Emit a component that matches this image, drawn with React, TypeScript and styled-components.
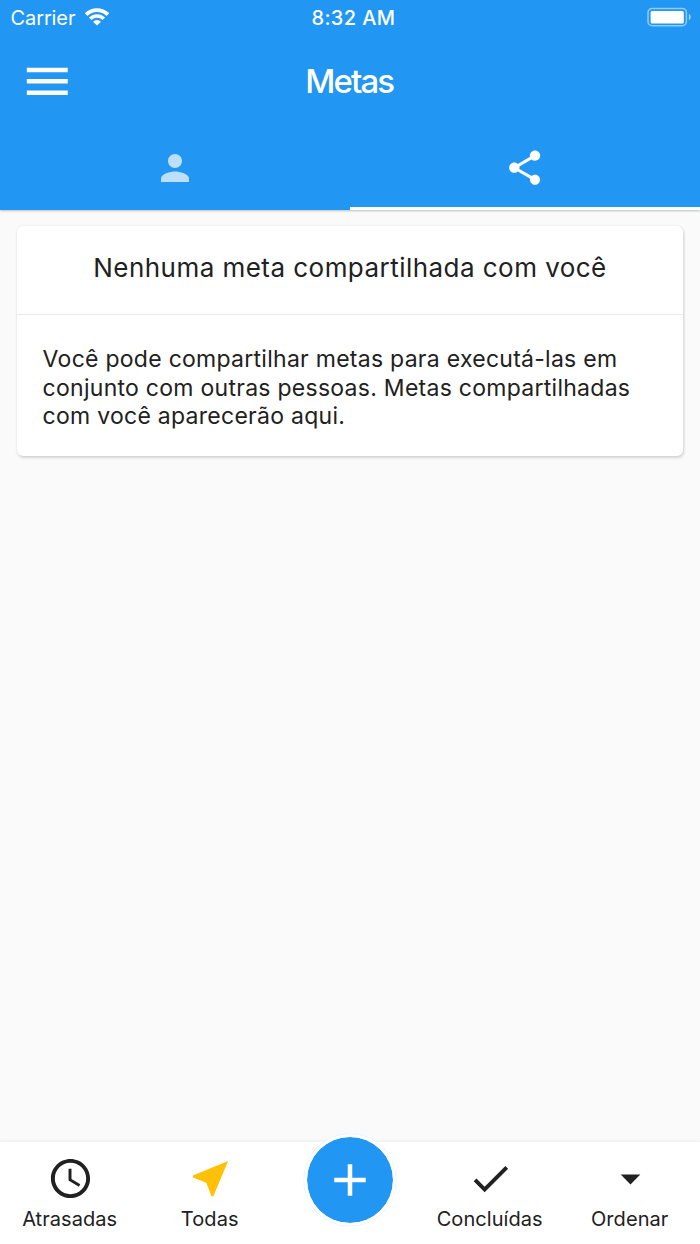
import React from 'react';
import styled, { createGlobalStyle } from 'styled-components';

const GlobalStyle = createGlobalStyle`
  * { box-sizing: border-box; }
  body { margin: 0; background: #fafafa; }
  h1, h2, p { margin: 0; font-weight: 400; }
  button { border: 0; padding: 0; background: none; font: inherit; color: inherit; }
  svg { display: block; }
`;

const Screen = styled.div`
  width: 700px;
  height: 1244px;
  display: flex;
  flex-direction: column;
  overflow: hidden;
  background: #fafafa;
  color: #212121;
  font-family: Inter, 'Liberation Sans', sans-serif;
`;

const Header = styled.header`
  flex: none;
  height: 209.6px;
  display: flex;
  flex-direction: column;
  background: #2196f3;
  color: #fff;
  box-shadow: 0 1px 2px rgba(0, 0, 0, 0.24);
`;

const StatusBar = styled.div`
  height: 36px;
  display: grid;
  grid-template-columns: 1fr auto 1fr;
  align-items: center;
  padding: 0 8.6px 0 10.5px;
  font-size: 20px;
  line-height: 36px;
`;

const Carrier = styled.div`
  display: flex;
  align-items: center;
  gap: 9.6px;
  letter-spacing: -0.1px;
  svg { margin-top: -2px; }
`;

const Clock = styled.div`
  font-weight: 500;
  letter-spacing: 0.4px;
  padding-left: 5px;
`;

const BatterySlot = styled.div`
  display: flex;
  justify-content: flex-end;
  svg { margin-top: -3px; }
`;

const TitleBar = styled.div`
  height: 91px;
  display: grid;
  grid-template-columns: 80px 1fr 80px;
  align-items: center;
  padding: 0 20px;
`;

const Title = styled.h1`
  text-align: center;
  font-size: 33px;
  font-weight: 500;
  line-height: 40px;
  letter-spacing: -1.9px;
  padding: 0 1.5px 2px 0;
`;

const Tabs = styled.nav`
  flex: 1;
  display: grid;
  grid-template-columns: 1fr 1fr;
`;

const Tab = styled.button<{ $active?: boolean }>`
  display: flex;
  align-items: center;
  justify-content: center;
  padding-top: 1.6px;
  border-bottom: 3.6px solid ${(p) => (p.$active ? '#fff' : 'transparent')};
  svg { opacity: ${(p) => (p.$active ? 1 : 0.7)}; }
`;

const Content = styled.main`
  flex: 1;
  padding: 16.6px 17px;
`;

const Card = styled.section`
  background: #fff;
  border-radius: 6px;
  height: 230px;
  box-shadow: 1px 2px 3px rgba(0, 0, 0, 0.14), 0 0 3px rgba(0, 0, 0, 0.07);
`;

const CardTitle = styled.h2`
  height: 88.4px;
  border-bottom: 1px solid #ebebeb;
  text-align: center;
  font-size: 26px;
  line-height: 84px;
  letter-spacing: 0.46px;
  white-space: nowrap;
`;

const CardText = styled.p`
  padding: 30.2px 25.6px 0;
  font-size: 23px;
  line-height: 28.8px;
  letter-spacing: 0.27px;
  white-space: nowrap;
`;

const BottomBar = styled.nav`
  flex: none;
  height: 102.4px;
  display: grid;
  grid-template-columns: repeat(5, 1fr);
  background: #fff;
  box-shadow: 0 -1px 3px rgba(0, 0, 0, 0.06);
`;

const BarItem = styled.button`
  display: flex;
  flex-direction: column;
  align-items: center;
  padding-top: 13.8px;
  font-size: 20px;
`;

const BarLabel = styled.span`
  margin-top: 4.6px;
  padding-right: 0.6px;
  line-height: 24px;
  letter-spacing: 0.06px;
`;

const AddButton = styled.button`
  justify-self: center;
  margin-top: -7.2px;
  width: 92px;
  height: 92px;
  display: grid;
  place-items: center;
  border: 3px solid #fff;
  border-radius: 50%;
  background: #2196f3;
  background-clip: padding-box;
  box-shadow: 0 0 1px rgba(33, 150, 243, 0.4);
  color: #fff;
`;

const PATHS = {
  menu: 'M3 18h18v-2H3v2zm0-5h18v-2H3v2zm0-7v2h18V6H3z',
  person: 'M12 12c2.21 0 4-1.79 4-4s-1.79-4-4-4-4 1.79-4 4 1.79 4 4 4zm0 2c-2.67 0-8 1.34-8 4v2h16v-2c0-2.66-5.33-4-8-4z',
  share:
    'M18 16.08c-.76 0-1.44.3-1.96.77L8.91 12.7c.05-.23.09-.46.09-.7s-.04-.47-.09-.7l7.05-4.11c.54.5 1.25.81 2.04.81 1.66 0 3-1.34 3-3s-1.34-3-3-3-3 1.34-3 3c0 .24.04.47.09.7L8.04 9.81C7.5 9.31 6.79 9 6 9c-1.66 0-3 1.34-3 3s1.34 3 3 3c.79 0 1.5-.31 2.04-.81l7.12 4.16c-.05.21-.08.43-.08.65 0 1.61 1.31 2.92 2.92 2.92 1.61 0 2.92-1.31 2.92-2.92s-1.31-2.92-2.92-2.92z',
  clock:
    'M11.99 2C6.47 2 2 6.48 2 12s4.47 10 9.99 10C17.52 22 22 17.52 22 12S17.52 2 11.99 2zM12 20c-4.42 0-8-3.58-8-8s3.58-8 8-8 8 3.58 8 8-3.58 8-8 8zm.5-13H11v6l5.25 3.15.75-1.23-4.5-2.67z',
  near: 'M21 3L3 10.53v.98l6.84 2.65L12.48 21h.98L21 3z',
  plus: 'M19 13h-6v6h-2v-6H5v-2h6V5h2v6h6v2z',
  check: 'M9 16.17L4.83 12l-1.42 1.41L9 19 21 7l-1.41-1.41z',
  caret: 'M7 10l5 5 5-5z',
};

function Icon({ name, size, color = 'currentColor' }: { name: keyof typeof PATHS; size: number; color?: string }) {
  return (
    <svg width={size} height={size} viewBox="0 0 24 24" fill={color}>
      <path d={PATHS[name]} />
    </svg>
  );
}

function Wifi() {
  return (
    <svg width="24" height="18" viewBox="0 0 24 18" fill="none" stroke="#fff">
      <path d="M1.1 6.7a15.4 15.4 0 0 1 21.8 0" strokeWidth="3.8" />
      <path d="M5.2 10.8a9.6 9.6 0 0 1 13.6 0" strokeWidth="3.6" />
      <path d="M12 17.6l-3.96-3.96a5.6 5.6 0 0 1 7.92 0z" fill="#fff" stroke="none" />
    </svg>
  );
}

function Battery() {
  return (
    <svg width="44" height="20" viewBox="0 0 44 20">
      <rect x="1" y="1.4" width="38.4" height="17.4" rx="4.2" fill="none" stroke="#fff" strokeOpacity="0.5" strokeWidth="1.5" />
      <rect x="3.6" y="3.9" width="33.2" height="12.6" rx="1.6" fill="#fff" />
      <path d="M41.9 6.8c2.3.8 2.3 5.8 0 6.6z" fill="#fff" fillOpacity="0.6" />
    </svg>
  );
}

const ITEMS_BEFORE = [
  { icon: 'clock', label: 'Atrasadas' },
  { icon: 'near', label: 'Todas', color: '#ffc107' },
] as const;

const ITEMS_AFTER = [
  { icon: 'check', label: 'Concluídas' },
  { icon: 'caret', label: 'Ordenar' },
] as const;

export default function App() {
  return (
    <>
      <GlobalStyle />
      <Screen>
        <Header>
          <StatusBar>
            <Carrier>
              Carrier
              <Wifi />
            </Carrier>
            <Clock>8:32 AM</Clock>
            <BatterySlot>
              <Battery />
            </BatterySlot>
          </StatusBar>
          <TitleBar>
            <button aria-label="Menu">
              <Icon name="menu" size={54.6} />
            </button>
            <Title>Metas</Title>
          </TitleBar>
          <Tabs>
            <Tab aria-label="Pessoais">
              <Icon name="person" size={42} />
            </Tab>
            <Tab $active aria-label="Compartilhadas">
              <Icon name="share" size={41.4} />
            </Tab>
          </Tabs>
        </Header>
        <Content>
          <Card>
            <CardTitle>Nenhuma meta compartilhada com você</CardTitle>
            <CardText>
              Você pode compartilhar metas para executá-las em
              <br />
              conjunto com outras pessoas. Metas compartilhadas
              <br />
              com você aparecerão aqui.
            </CardText>
          </Card>
        </Content>
        <BottomBar>
          {ITEMS_BEFORE.map((item) => (
            <BarItem key={item.label}>
              <Icon name={item.icon} size={47} color={'color' in item ? item.color : undefined} />
              <BarLabel>{item.label}</BarLabel>
            </BarItem>
          ))}
          <AddButton aria-label="Adicionar">
            <Icon name="plus" size={54} />
          </AddButton>
          {ITEMS_AFTER.map((item) => (
            <BarItem key={item.label}>
              <Icon name={item.icon} size={47} />
              <BarLabel>{item.label}</BarLabel>
            </BarItem>
          ))}
        </BottomBar>
      </Screen>
    </>
  );
}
